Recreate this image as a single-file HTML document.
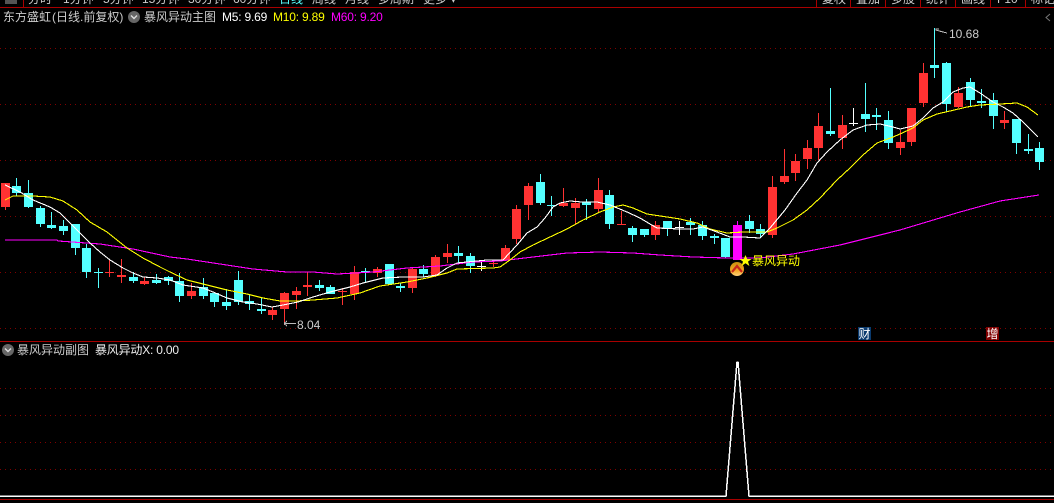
<!DOCTYPE html>
<html><head><meta charset="utf-8">
<style>
html,body{margin:0;padding:0;background:#000;width:1054px;height:503px;overflow:hidden}
#r{position:relative;width:1054px;height:503px;overflow:hidden;background:#000}
svg{position:absolute;left:0;top:0}
.t{position:absolute;white-space:nowrap;font:12px/14px "Liberation Sans","WenQuanYi Zen Hei","Noto Sans CJK SC",sans-serif;color:#ccc}
.n{letter-spacing:-.2px}
</style></head><body><div id="r">
<svg width="1054" height="503" viewBox="0 0 1054 503">
<g stroke="#800000" stroke-width="1" stroke-dasharray="1 4" fill="none" shape-rendering="crispEdges">
<path d="M0 48.5H1054M0 104.5H1054M0 160.5H1054M0 216.5H1054M0 272.5H1054M0 328.5H1054M0 388.5H1054M0 415.5H1054M0 442.5H1054M0 469.5H1054"/>
</g>
<g stroke="#a80000" fill="none" shape-rendering="crispEdges">
<path d="M0 7.5H1054M0 341.5H1054M0 499.5H1054M23.5 0V7M816.5 0V7M850.5 0V7M885.5 0V7M920.5 0V7M955.5 0V7M990.5 0V7M1025.5 0V7"/>
</g>
<path d="M5 0h12v4h-12z" fill="#555"/>
<g shape-rendering="crispEdges">
<path fill="none" stroke="#ff3232" d="M5.5 183V210M109.5 260V277M121.5 259V283M144.5 277V285M191.5 283V299M272.5 307V320M284.5 292V325M296.5 287V309M307.5 272V296M342.5 288V305M354.5 266V300M377.5 267V277M412.5 267V293M435.5 255V277M447.5 244V263M493.5 260V267M505.5 245V260M516.5 205V244M528.5 183V220M563.5 188V207M575.5 198V225M598.5 178V213M621.5 211V225M655.5 221V240M772.5 176V238M784.5 149V184M795.5 154V181M807.5 140V169M818.5 113V160M842.5 115V149M900.5 130V155M911.5 108V146M923.5 63V107M958.5 87V108M1004.5 111V129"/>
<path fill="#ff3232" d="M1 183h9V207h-9zM105 272h9V273h-9zM117 275h9V277h-9zM140 281h9V284h-9zM187 291h9V296h-9zM268 310h9V315h-9zM280 293h9V309h-9zM292 291h9V295h-9zM303 285h9V287h-9zM338 291h9V292h-9zM350 272h9V294h-9zM373 269h9V273h-9zM408 269h9V288h-9zM431 257h9V275h-9zM443 253h9V257h-9zM489 263h9V264h-9zM501 248h9V260h-9zM512 209h9V239h-9zM524 186h9V205h-9zM559 203h9V206h-9zM571 203h9V208h-9zM594 190h9V209h-9zM617 224h9V225h-9zM651 225h9V235h-9zM768 187h9V235h-9zM780 176h9V182h-9zM791 161h9V173h-9zM803 148h9V159h-9zM814 126h9V148h-9zM838 125h9V138h-9zM896 142h9V148h-9zM907 108h9V142h-9zM919 73h9V103h-9zM954 93h9V107h-9zM1000 120h9V123h-9z"/>
<path fill="none" stroke="#54ffff" d="M16.5 178V196M28.5 180V208M40.5 206V227M51.5 212V229M63.5 220V235M75.5 224V255M86.5 244V278M98.5 268V288M133.5 272V283M156.5 274V284M168.5 276V285M179.5 273V302M203.5 278V299M214.5 292V307M226.5 289V310M238.5 271V305M249.5 295V310M261.5 298V314M319.5 280V291M330.5 285V294M365.5 268V282M389.5 264V285M400.5 283V292M423.5 265V277M458.5 246V263M470.5 253V273M540.5 174V205M551.5 196V216M586.5 199V220M609.5 190V229M632.5 226V242M644.5 229V237M667.5 221V236M690.5 218V235M702.5 221V240M714.5 234V244M725.5 238V258M749.5 215V233M760.5 224V238M830.5 88V136M865.5 83V132M876.5 108V130M888.5 111V149M934.5 28V78M946.5 62V112M970.5 78V107M981.5 89V108M993.5 93V129M1016.5 119V154M1028.5 134V154M1039.5 142V170"/>
<path fill="#54ffff" d="M12 186h9V193h-9zM24 193h9V207h-9zM36 208h9V224h-9zM47 225h9V228h-9zM59 226h9V231h-9zM71 224h9V248h-9zM82 248h9V272h-9zM94 272h9V273h-9zM129 277h9V281h-9zM152 280h9V283h-9zM164 277h9V281h-9zM175 281h9V296h-9zM199 287h9V296h-9zM210 293h9V302h-9zM222 302h9V306h-9zM234 280h9V302h-9zM245 301h9V304h-9zM257 309h9V311h-9zM315 285h9V288h-9zM326 287h9V294h-9zM361 271h9V272h-9zM385 264h9V284h-9zM396 286h9V288h-9zM419 269h9V274h-9zM454 253h9V256h-9zM466 256h9V266h-9zM536 182h9V203h-9zM547 205h9V206h-9zM582 202h9V205h-9zM605 195h9V224h-9zM628 228h9V235h-9zM640 229h9V235h-9zM663 221h9V228h-9zM686 222h9V225h-9zM698 225h9V236h-9zM710 236h9V238h-9zM721 238h9V257h-9zM745 221h9V229h-9zM756 229h9V234h-9zM826 131h9V134h-9zM861 114h9V119h-9zM872 115h9V117h-9zM884 120h9V143h-9zM930 65h9V68h-9zM942 63h9V104h-9zM966 82h9V100h-9zM977 101h9V103h-9zM989 100h9V116h-9zM1012 119h9V143h-9zM1024 149h9V151h-9zM1035 148h9V162h-9z"/>
<path fill="none" stroke="#fff" d="M481.5 260V271M679.5 221V235M853.5 108V126"/>
<path fill="#fff" d="M477 266h9V267h-9zM675 227h9V228h-9zM849 123h9V124h-9z"/>
<path fill="none" stroke="#f0f" d="M737.5 221V225"/>
<path fill="#f0f" d="M733 225h9V260h-9z"/>
</g>
<g fill="none" stroke-width="1.1" shape-rendering="crispEdges" stroke-linejoin="round">
<polyline stroke="#f0f" points="5,240 57,240 58,241 100,244 133,249 170,257 187,259 220,264 253,269 287,272 313,272 337,274 373,272 407,268 440,266 473,262 500,261 533,257 567,253 600,252 633,253 660,255 693,257 727,258 760,258 793,254 840,245 900,230 960,212 1000,201 1039,195"/>
<polyline stroke="#ff0" points="5,200 13,196 33,196 50,197 63,201 77,210 90,222 107,232 127,248 143,258 160,267 170,272 187,280 207,285 227,290 247,294 263,298 280,301 297,301 313,300 337,298 360,293 380,286 407,282 427,278 447,273 457,269 493,268 500,267 510,260 520,252 533,245 550,237 567,229 583,220 600,212 613,207 623,205 633,208 647,214 667,217 680,219 697,223 710,229 727,233 743,232 767,232 777,228 793,220 807,210 820,198 837,180 850,168 863,155 877,143 893,137 900,134 913,128 923,120 937,114 950,111 967,107 980,105 1000,104 1017,103 1027,107 1038,115"/>
<polyline stroke="#fff" points="5,185 20,192 33,200 50,207 60,213 70,223 80,233 90,243 100,252 110,260 123,268 133,273 143,277 157,278 170,280 183,285 203,288 213,292 227,298 243,302 257,304 272,307 283,305 298,302 313,297 330,292 350,287 363,283 383,278 403,277 423,277 437,275 447,268 457,263 467,262 487,260 503,260 517,245 527,233 537,227 545,218 553,207 560,203 570,201 582,202 597,202 610,205 627,212 640,218 650,224 657,228 680,229 693,229 703,227 717,232 730,237 743,237 760,238 770,228 785,210 797,193 807,180 817,163 827,152 840,140 853,130 867,125 880,124 893,127 900,129 913,126 923,118 933,108 943,102 953,92 963,88 970,87 980,93 993,102 1003,107 1013,113 1023,122 1038,137"/>
</g>
<g fill="none" stroke="#bbb" shape-rendering="crispEdges">
<path d="M935.5 29H939M935.5 30L947 33M284 323.5H296M284 323.5L287 321M284 323.5L287 326"/>
</g>
<path d="M1050 14L1046 17.5L1050 21" fill="none" stroke="#777"/>
<defs><linearGradient id="g" x1="0" y1="0" x2="0" y2="1"><stop offset="0" stop-color="#c8900f"/><stop offset=".6" stop-color="#f5a623"/><stop offset="1" stop-color="#ffd27a"/></linearGradient></defs>
<circle cx="737" cy="269" r="7" fill="url(#g)"/>
<path d="M732 272L737 266L742 272" fill="none" stroke="#c8261a" stroke-width="2.2"/>
<path d="M745.5 255l1.7 4h4.3l-3.5 2.6 1.4 4.4-3.9-2.7-3.9 2.7 1.4-4.4-3.5-2.6h4.3z" fill="#ff0"/>
<circle cx="134" cy="17" r="6" fill="#666"/><path d="M131 15.5l3 3 3-3" fill="none" stroke="#ddd" stroke-width="1.4"/>
<circle cx="8" cy="350" r="6" fill="#666"/><path d="M5 348.5l3 3 3-3" fill="none" stroke="#ddd" stroke-width="1.4"/>
<g fill="none" stroke="#fff" shape-rendering="crispEdges">
<path stroke-width="1.5" d="M0 496H726L737 362H738L749 496H1054"/>
</g>
<rect x="858" y="327" width="13" height="13" fill="#0a3a6e"/>
<rect x="986" y="327" width="13" height="13" fill="#800000"/>
</svg>
<span class="t" style="left:28px;top:-8px">分时</span>
<span class="t" style="left:63px;top:-8px">1分钟</span>
<span class="t" style="left:103px;top:-8px">5分钟</span>
<span class="t" style="left:142px;top:-8px">15分钟</span>
<span class="t" style="left:188px;top:-8px">30分钟</span>
<span class="t" style="left:233px;top:-8px">60分钟</span>
<span class="t" style="left:279px;top:-8px;color:#54ffff">日线</span>
<span class="t" style="left:312px;top:-8px">周线</span>
<span class="t" style="left:345px;top:-8px">月线</span>
<span class="t" style="left:378px;top:-8px">多周期</span>
<span class="t" style="left:423px;top:-8px">更多 ▾</span>
<span class="t" style="left:822px;top:-8px">复权</span>
<span class="t" style="left:856px;top:-8px">叠加</span>
<span class="t" style="left:891px;top:-8px">多股</span>
<span class="t" style="left:926px;top:-8px">统计</span>
<span class="t" style="left:961px;top:-8px">画线</span>
<span class="t" style="left:997px;top:-8px">F10</span>
<span class="t" style="left:1031px;top:-8px">标记</span>
<span class="t" style="left:3px;top:10px">东方盛虹</span>
<span class="t" style="left:52px;top:10px">(日线.前复权)</span>
<span class="t" style="left:144px;top:10px">暴风异动主图</span>
<span class="t n" style="left:222px;top:10px;color:#fff">M5: 9.69</span>
<span class="t n" style="left:273px;top:10px;color:#ff0">M10: 9.89</span>
<span class="t n" style="left:331px;top:10px;color:#f0f">M60: 9.20</span>
<span class="t" style="left:949px;top:27px">10.68</span>
<span class="t" style="left:297px;top:318px">8.04</span>
<span class="t" style="left:752px;top:254px;color:#ff0">暴风异动</span>
<span class="t" style="left:858px;top:327px;color:#fff;width:13px;text-align:center">财</span>
<span class="t" style="left:986px;top:327px;color:#fff;width:13px;text-align:center">增</span>
<span class="t" style="left:17px;top:343px">暴风异动副图</span>
<span class="t n" style="left:95px;top:343px;color:#eee">暴风异动X: 0.00</span>
</div></body></html>
